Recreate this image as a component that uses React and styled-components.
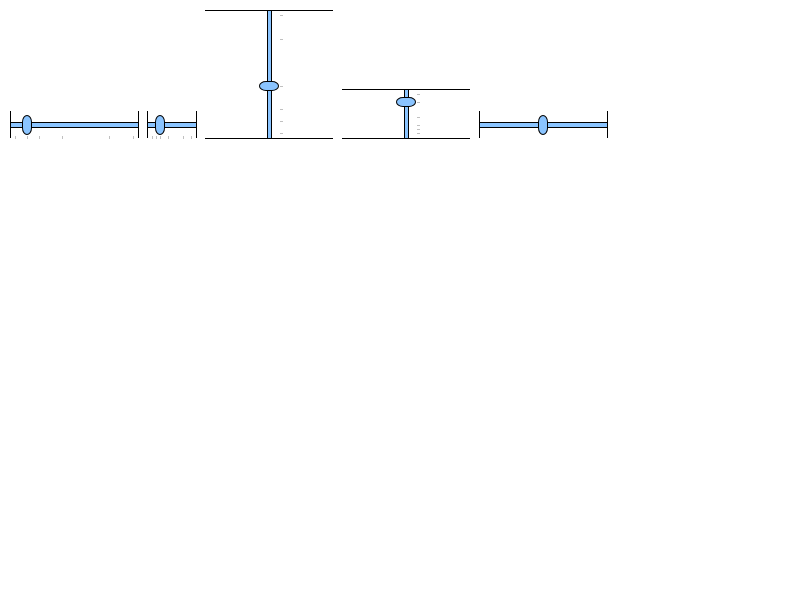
import React from "react";
import styled, { createGlobalStyle, css } from "styled-components";

const BLUE = "#8ac4ff";

const GlobalStyle = createGlobalStyle`
  body {
    margin: 0;
    background: #fff;
    font-family: "Liberation Sans", Arial, sans-serif;
  }
`;

const Row = styled.main`
  display: flex;
  flex-wrap: wrap;
  align-items: flex-end;
  gap: 8px;
  padding: 10px;
`;

const Cell = styled.div`
  position: relative;
  display: flex;
  margin-bottom: ${(p) => (p.$vertical ? 0 : 1)}px;
  margin-right: ${(p) => (p.$vertical ? 1 : 0)}px;
`;

const horizontal = css`
  width: ${(p) => p.$length}px;
  height: 27px;
  box-shadow: inset 1px 0 #000, inset -1px 0 #000;

  &::-webkit-slider-runnable-track {
    height: 6px;
    background: ${BLUE};
    box-shadow: inset 0 0 0 1px #000;
  }

  &::-webkit-slider-thumb {
    width: 10px;
    height: 20px;
    margin-top: -7px;
    border-radius: 5px / 7px;
  }
`;

const vertical = css`
  writing-mode: vertical-lr;
  direction: rtl;
  width: 128px;
  height: ${(p) => p.$length}px;
  box-shadow: inset 0 1px #000, inset 0 -1px #000;

  &::-webkit-slider-runnable-track {
    width: 5px;
    background: ${BLUE};
    box-shadow: inset 0 0 0 1px #000;
  }

  &::-webkit-slider-thumb {
    width: 20px;
    height: 10px;
    margin-left: -8px;
    border-radius: 7px / 5px;
  }
`;

const Range = styled.input`
  appearance: none;
  box-sizing: border-box;
  margin: 0;
  padding: 0;
  background: transparent;

  &::-webkit-slider-runnable-track {
    appearance: none;
    box-sizing: border-box;
  }

  &::-webkit-slider-thumb {
    appearance: none;
    box-sizing: border-box;
    border: 1px solid #000;
    background: ${BLUE};
  }

  ${(p) => (p.$vertical ? vertical : horizontal)}
`;

const Scale = styled.div`
  position: absolute;
  pointer-events: none;
  ${(p) =>
    p.$vertical
      ? css`
          inset: 5px auto 6px 75px;
          width: 3px;
        `
      : css`
          inset: auto 6px -1px 5px;
          height: 3px;
        `}
`;

const Tick = styled.span`
  position: absolute;
  width: ${(p) => (p.$vertical ? 3 : 1)}px;
  height: ${(p) => (p.$vertical ? 1 : 3)}px;
  background: #c0c0c0;
`;

const STOPS = [0, 10, 20, 40, 80, 100];

function Slider({ label, value, length = 129, isVertical = false, stops = [] }) {
  return (
    <Cell $vertical={isVertical}>
      <Range
        type="range"
        step="any"
        aria-label={label}
        defaultValue={value}
        $length={length}
        $vertical={isVertical}
      />
      <Scale $vertical={isVertical}>
        {stops.map((stop) => (
          <Tick
            key={stop}
            $vertical={isVertical}
            style={isVertical ? { top: `${100 - stop}%` } : { left: `${stop}%` }}
          />
        ))}
      </Scale>
    </Cell>
  );
}

export default function App() {
  return (
    <>
      <GlobalStyle />
      <Row>
        <Slider label="Wide horizontal" value={10} stops={STOPS} />
        <Slider label="Narrow horizontal" value={20} length={50} stops={STOPS} />
        <Slider label="Tall vertical" value={40} isVertical stops={STOPS} />
        <Slider label="Short vertical" value={80} length={50} isVertical stops={STOPS} />
        <Slider label="Plain horizontal" value={49.5} />
      </Row>
    </>
  );
}
